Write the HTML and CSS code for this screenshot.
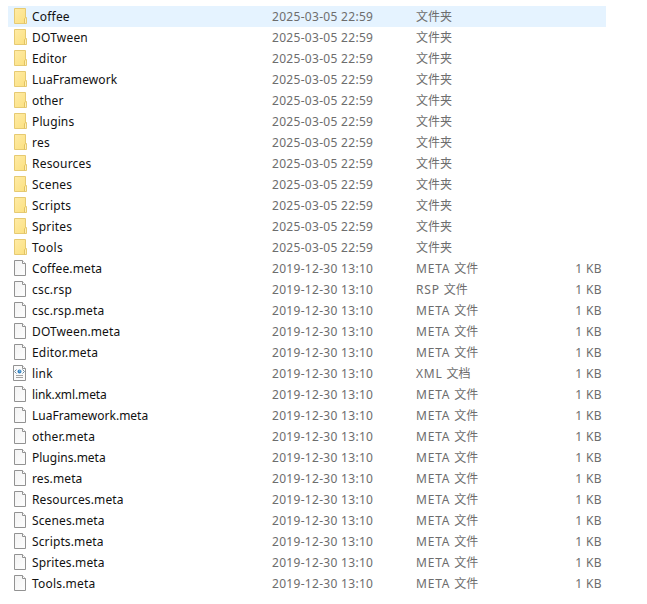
FILE: index.html
```html
<!DOCTYPE html>
<html lang="zh-CN">
<head>
<meta charset="utf-8">
<title>Assets</title>
<link rel="stylesheet" href="styles.css">
</head>
<body>
<svg class="defs" aria-hidden="true">
  <defs>
    <linearGradient id="folderFill" x1="0" y1="0" x2="1" y2="1"><stop offset="0" stop-color="#ffeba6"/><stop offset="1" stop-color="#fbe07e"/></linearGradient>
    <linearGradient id="pageFill" x1="0" y1="0" x2="1" y2="1"><stop offset="0" stop-color="#f3f3f3"/><stop offset="1" stop-color="#fdfdfd"/></linearGradient>
  </defs>
  <symbol id="folder" viewBox="0 0 16 16"><path d="M2.5 .5h11v9h1v6h-12z" fill="url(#folderFill)" stroke="#e6ca72"/><path d="M12.5 15.5v-4.5l1-1.5" fill="none" stroke="#e3c262"/><path d="M13 10.5h1v4.5h-1z" fill="#fff0b5"/></symbol>
  <symbol id="file" viewBox="0 0 16 16"><path d="M2.5 .5h8l3 3v12h-11z" fill="url(#pageFill)" stroke="#929292"/><path d="M10.5 .5v3h3" fill="#fff" stroke="#929292"/></symbol>
  <symbol id="xml" viewBox="0 0 16 16"><path d="M1.5 .5h9l3 3v12h-12z" fill="#fbfbfb" stroke="#929292"/><path d="M10.5 .5v3h3" fill="#fff" stroke="#929292"/><path d="M4.5 4.5l-2 2 2 2M10.5 4.5l2 2-2 2" fill="none" stroke="#6c8ba0"/><circle cx="7.5" cy="6.5" r="2" fill="#3683c2"/><path d="M7 5.5h1.5v1H7z" fill="#9bd1ef"/><path d="M4 10.5h7M4 12.5h7" stroke="#a3a3a3"/></symbol>
</svg>
<main class="list">
  <div class="row selected"><svg class="icon"><use href="#folder"/></svg><span class="name">Coffee</span><span class="date">2025-03-05 22:59</span><span class="type">文件夹</span><span class="size"></span></div>
  <div class="row"><svg class="icon"><use href="#folder"/></svg><span class="name">DOTween</span><span class="date">2025-03-05 22:59</span><span class="type">文件夹</span><span class="size"></span></div>
  <div class="row"><svg class="icon"><use href="#folder"/></svg><span class="name">Editor</span><span class="date">2025-03-05 22:59</span><span class="type">文件夹</span><span class="size"></span></div>
  <div class="row"><svg class="icon"><use href="#folder"/></svg><span class="name snug">LuaFramework</span><span class="date">2025-03-05 22:59</span><span class="type">文件夹</span><span class="size"></span></div>
  <div class="row"><svg class="icon"><use href="#folder"/></svg><span class="name">other</span><span class="date">2025-03-05 22:59</span><span class="type">文件夹</span><span class="size"></span></div>
  <div class="row"><svg class="icon"><use href="#folder"/></svg><span class="name snug">Plugins</span><span class="date">2025-03-05 22:59</span><span class="type">文件夹</span><span class="size"></span></div>
  <div class="row"><svg class="icon"><use href="#folder"/></svg><span class="name">res</span><span class="date">2025-03-05 22:59</span><span class="type">文件夹</span><span class="size"></span></div>
  <div class="row"><svg class="icon"><use href="#folder"/></svg><span class="name">Resources</span><span class="date">2025-03-05 22:59</span><span class="type">文件夹</span><span class="size"></span></div>
  <div class="row"><svg class="icon"><use href="#folder"/></svg><span class="name">Scenes</span><span class="date">2025-03-05 22:59</span><span class="type">文件夹</span><span class="size"></span></div>
  <div class="row"><svg class="icon"><use href="#folder"/></svg><span class="name">Scripts</span><span class="date">2025-03-05 22:59</span><span class="type">文件夹</span><span class="size"></span></div>
  <div class="row"><svg class="icon"><use href="#folder"/></svg><span class="name">Sprites</span><span class="date">2025-03-05 22:59</span><span class="type">文件夹</span><span class="size"></span></div>
  <div class="row"><svg class="icon"><use href="#folder"/></svg><span class="name wide">Tools</span><span class="date">2025-03-05 22:59</span><span class="type">文件夹</span><span class="size"></span></div>
  <div class="row"><svg class="icon"><use href="#file"/></svg><span class="name snug">Coffee.meta</span><span class="date">2019-12-30 13:10</span><span class="type"><span class="ext">META </span>文件</span><span class="size">1 KB</span></div>
  <div class="row"><svg class="icon"><use href="#file"/></svg><span class="name">csc.rsp</span><span class="date">2019-12-30 13:10</span><span class="type"><span class="ext">RSP </span>文件</span><span class="size">1 KB</span></div>
  <div class="row"><svg class="icon"><use href="#file"/></svg><span class="name snug">csc.rsp.meta</span><span class="date">2019-12-30 13:10</span><span class="type"><span class="ext">META </span>文件</span><span class="size">1 KB</span></div>
  <div class="row"><svg class="icon"><use href="#file"/></svg><span class="name snug">DOTween.meta</span><span class="date">2019-12-30 13:10</span><span class="type"><span class="ext">META </span>文件</span><span class="size">1 KB</span></div>
  <div class="row"><svg class="icon"><use href="#file"/></svg><span class="name">Editor.meta</span><span class="date">2019-12-30 13:10</span><span class="type"><span class="ext">META </span>文件</span><span class="size">1 KB</span></div>
  <div class="row"><svg class="icon"><use href="#xml"/></svg><span class="name">link</span><span class="date">2019-12-30 13:10</span><span class="type"><span class="ext">XML </span>文档</span><span class="size">1 KB</span></div>
  <div class="row"><svg class="icon"><use href="#file"/></svg><span class="name tight">link.xml.meta</span><span class="date">2019-12-30 13:10</span><span class="type"><span class="ext">META </span>文件</span><span class="size">1 KB</span></div>
  <div class="row"><svg class="icon"><use href="#file"/></svg><span class="name close">LuaFramework.meta</span><span class="date">2019-12-30 13:10</span><span class="type"><span class="ext">META </span>文件</span><span class="size">1 KB</span></div>
  <div class="row"><svg class="icon"><use href="#file"/></svg><span class="name">other.meta</span><span class="date">2019-12-30 13:10</span><span class="type"><span class="ext">META </span>文件</span><span class="size">1 KB</span></div>
  <div class="row"><svg class="icon"><use href="#file"/></svg><span class="name close">Plugins.meta</span><span class="date">2019-12-30 13:10</span><span class="type"><span class="ext">META </span>文件</span><span class="size">1 KB</span></div>
  <div class="row"><svg class="icon"><use href="#file"/></svg><span class="name snug">res.meta</span><span class="date">2019-12-30 13:10</span><span class="type"><span class="ext">META </span>文件</span><span class="size">1 KB</span></div>
  <div class="row"><svg class="icon"><use href="#file"/></svg><span class="name snug">Resources.meta</span><span class="date">2019-12-30 13:10</span><span class="type"><span class="ext">META </span>文件</span><span class="size">1 KB</span></div>
  <div class="row"><svg class="icon"><use href="#file"/></svg><span class="name snug">Scenes.meta</span><span class="date">2019-12-30 13:10</span><span class="type"><span class="ext">META </span>文件</span><span class="size">1 KB</span></div>
  <div class="row"><svg class="icon"><use href="#file"/></svg><span class="name snug">Scripts.meta</span><span class="date">2019-12-30 13:10</span><span class="type"><span class="ext">META </span>文件</span><span class="size">1 KB</span></div>
  <div class="row"><svg class="icon"><use href="#file"/></svg><span class="name snug">Sprites.meta</span><span class="date">2019-12-30 13:10</span><span class="type"><span class="ext">META </span>文件</span><span class="size">1 KB</span></div>
  <div class="row"><svg class="icon"><use href="#file"/></svg><span class="name">Tools.meta</span><span class="date">2019-12-30 13:10</span><span class="type"><span class="ext">META </span>文件</span><span class="size">1 KB</span></div>
</main>
</body>
</html>
```
FILE: styles.css
```css
body {
  margin: 0;
  background: #fff;
  font-family: "Noto Sans", "Noto Sans CJK SC", sans-serif;
  font-size: 12px;
  color: #6d6d6d;
}

.defs {
  display: block;
  width: 0;
  height: 0;
}

.list {
  width: 598px;
  padding: 6px 0 0 8px;
}

.row {
  display: grid;
  grid-template-columns: 20px 240px 144px 130px 60px;
  align-items: start;
  box-sizing: border-box;
  height: 21px;
  padding-left: 4px;
  line-height: 21px;
  white-space: nowrap;
}

.selected {
  background: #e5f3ff;
}

.icon {
  display: block;
  width: 16px;
  height: 16px;
  margin-top: 2px;
}

.name {
  color: #111;
  letter-spacing: 0.2px;
  font-variant-ligatures: none;
}

.wide {
  letter-spacing: 0.4px;
}

.snug {
  letter-spacing: 0.12px;
}

.close {
  letter-spacing: 0;
}

.tight {
  letter-spacing: -0.12px;
}

.date {
  letter-spacing: 0.3px;
}

.ext {
  letter-spacing: 0.8px;
}

.size {
  text-align: right;
  padding-right: 4px;
  letter-spacing: 0.4px;
}
```
